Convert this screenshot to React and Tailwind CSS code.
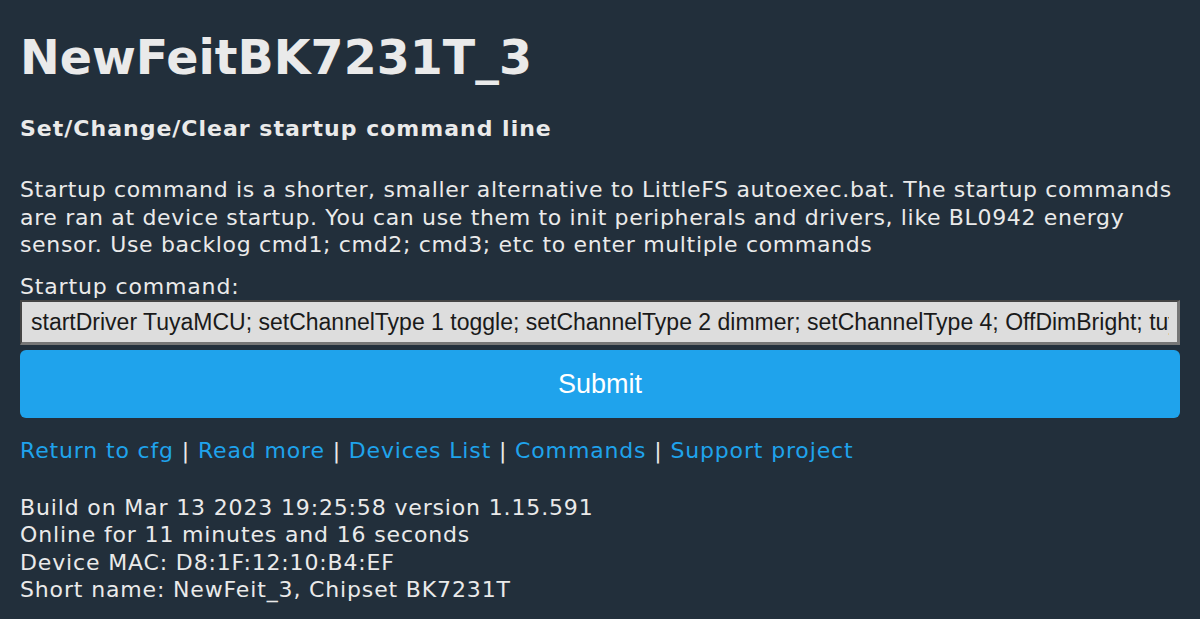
export default function App() {
  const v = { fontFamily: 'Verdana, "DejaVu Sans", sans-serif' };
  const a = { fontFamily: '"Liberation Sans", Arial, sans-serif' };
  return (
    <div className="w-[1200px] h-[619px] bg-[#222f3b] text-[#eaeaea] overflow-hidden px-5 tracking-[0.85px]" style={v}>
      <h1 className="text-[47.5px] font-bold leading-[56px] pt-[30px] tracking-normal">NewFeitBK7231T_3</h1>
      <h3 className="text-[22px] font-bold leading-[28px] mt-[29px] tracking-[1px]">Set/Change/Clear startup command line</h3>
      <p className="text-[22px] leading-[27.5px] mt-[33px] tracking-[0.66px]">
        Startup command is a shorter, smaller alternative to LittleFS autoexec.bat. The startup commands are ran at device startup. You can use them to init peripherals and drivers, like BL0942 energy sensor. Use backlog cmd1; cmd2; cmd3; etc to enter multiple commands
      </p>
      <div className="text-[22px] leading-[27.5px] mt-[14px]">Startup command:</div>
      <div className="mt-[0px] h-[45px] bg-[#dddddd] border-l-2 border-t-2 border-[#444] border-b-[3px] border-r-[3px] border-b-[#767676] border-r-[#767676] flex items-center pl-[9px] pr-[8px] overflow-hidden tracking-normal text-[23px] text-[#1a1a1a]" style={a}>
        <span className="block w-full overflow-hidden whitespace-nowrap">startDriver TuyaMCU; setChannelType 1 toggle; setChannelType 2 dimmer; setChannelType 4; OffDimBright; tuyaMcu_setDimmerRange 1 1000</span>
      </div>
      <button className="mt-[5px] w-full h-[68px] bg-[#1fa3ec] rounded-[6px] text-white text-[27px] tracking-normal" style={a}>Submit</button>
      <div className="text-[22px] leading-[27.5px] mt-[19px]">
        <span className="text-[#1fa3ec]">Return to cfg</span> | <span className="text-[#1fa3ec]">Read more</span> | <span className="text-[#1fa3ec]">Devices List</span> | <span className="text-[#1fa3ec]">Commands</span> | <span className="text-[#1fa3ec]">Support project</span>
      </div>
      <div className="text-[22px] leading-[27.5px] mt-[29px]">
        <div>Build on Mar 13 2023 19:25:58 version 1.15.591</div>
        <div>Online for 11 minutes and 16 seconds</div>
        <div>Device MAC: D8:1F:12:10:B4:EF</div>
        <div>Short name: NewFeit_3, Chipset BK7231T</div>
      </div>
    </div>
  );
}
